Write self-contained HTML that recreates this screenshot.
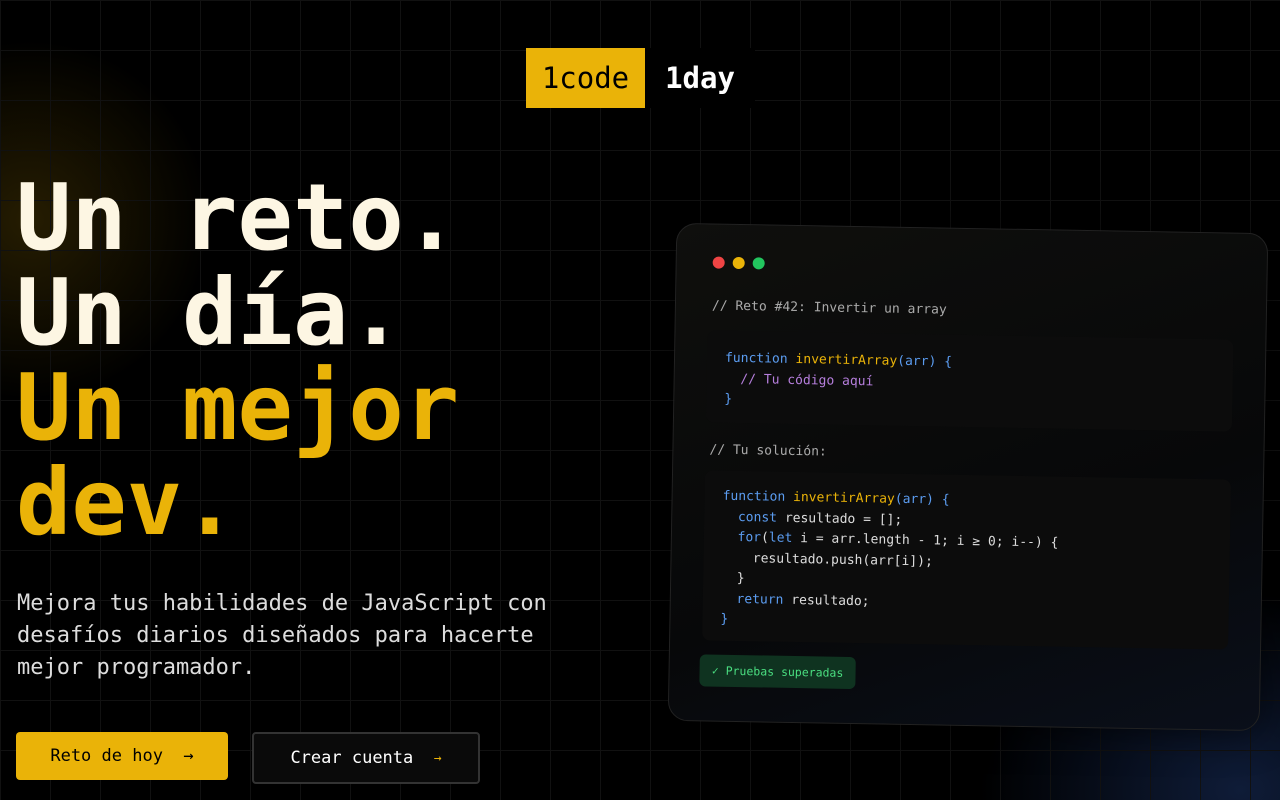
<!DOCTYPE html>
<html><head><meta charset="utf-8"><style>
*{margin:0;padding:0;box-sizing:border-box}
html,body{width:1280px;height:800px;overflow:hidden;background:#000}
body{position:relative;font-family:"DejaVu Sans Mono","Liberation Mono",monospace;color:#fff;
background:
radial-gradient(circle at 30px 220px,rgba(234,179,8,.16),rgba(234,179,8,0) 180px),
radial-gradient(ellipse 260px 200px at 1240px 790px,rgba(37,70,140,.4),rgba(0,0,0,0)),
#000}
.grid{position:absolute;inset:0;background-image:linear-gradient(#111 1px,transparent 1px),linear-gradient(90deg,#111 1px,transparent 1px);background-size:50px 50px;background-position:0 0}
.logo{position:absolute;top:48px;left:526px;height:60px;display:flex;font-size:29px;}
.logo .a{background:#eab308;color:#000;width:119px;display:flex;align-items:center;justify-content:center}
.logo .b{background:#000;color:#fff;width:110px;display:flex;align-items:center;justify-content:center;font-weight:bold}
h1{position:absolute;left:16px;top:170px;font-size:92px;line-height:95px;font-weight:bold;letter-spacing:0;color:#fdf6e3}
h1 .y{color:#eab308}
p.sub{position:absolute;left:17px;top:588px;font-size:22px;line-height:32px;color:#ddd;width:580px;letter-spacing:0}
.btn1{position:absolute;left:16px;top:732px;width:212px;height:48px;background:#eab308;border-radius:4px;color:#000;font-size:17px;display:flex;align-items:center;justify-content:center}
.btn2{position:absolute;left:252px;top:732px;width:228px;height:52px;background:#0a0a0a;border:2px solid #333;border-radius:4px;color:#fff;font-size:17px;display:flex;align-items:center;justify-content:center}
.card{position:absolute;left:672px;top:228px;width:592px;height:498px;border-radius:20px;border:1px solid #222;background:linear-gradient(160deg,#0f0f0d,#070809 60%,#0a0f1a);transform:rotate(1deg);box-shadow:0 0 40px rgba(0,0,0,.6)}
.dots{position:absolute;left:36px;top:32px;display:flex;gap:8px}
.dots i{width:12px;height:12px;border-radius:50%;display:block}
.c{position:absolute;font-size:13px;line-height:20.5px;white-space:pre;color:#ddd;letter-spacing:0}
.blk{position:absolute;background:#0c0c0c;border-radius:8px}
.k{color:#5b9cf0}.f{color:#eab308}.m{color:#b57edc}.g{color:#aaa}
.pass{position:absolute;left:30px;top:430px;width:156px;height:32px;border-radius:6px;background:#0f3320;color:#4ade80;font-size:11.5px;display:flex;align-items:center;justify-content:center}
</style></head><body>
<div class="grid"></div>
<div class="logo"><div class="a">1code</div><div class="b">1day</div></div>
<h1>Un reto.<br>Un día.<br><span class="y">Un mejor<br>dev.</span></h1>
<p class="sub">Mejora tus habilidades de JavaScript con<br>desafíos diarios diseñados para hacerte<br>mejor programador.</p>
<div class="btn1">Reto de hoy &nbsp;→</div>
<div class="btn2">Crear cuenta &nbsp;<span style="color:#eab308;font-size:13px">→</span></div>
<div class="card">
<div class="dots"><i style="background:#ef4444"></i><i style="background:#eab308"></i><i style="background:#22c55e"></i></div>
<div class="c g" style="left:36px;top:72px">// Reto #42: Invertir un array</div>
<div class="blk" style="left:32px;top:106px;width:526px;height:92px"></div>
<div class="c" style="left:50px;top:124px"><span class="k">function</span> <span class="f">invertirArray</span><span class="k">(arr) {</span>
  <span class="m">// Tu código aquí</span>
<span class="k">}</span></div>
<div class="c g" style="left:36px;top:216px">// Tu solución:</div>
<div class="blk" style="left:32px;top:246px;width:526px;height:170px"></div>
<div class="c" style="left:50px;top:262px"><span class="k">function</span> <span class="f">invertirArray</span><span class="k">(arr) {</span>
  <span class="k">const</span> resultado = [];
  <span class="k">for</span>(<span class="k">let</span> i = arr.length - 1; i ≥ 0; i--) {
    resultado.push(arr[i]);
  }
  <span class="k">return</span> resultado;
<span class="k">}</span></div>
<div class="pass">✓ Pruebas superadas</div>
</div>
</body></html>
